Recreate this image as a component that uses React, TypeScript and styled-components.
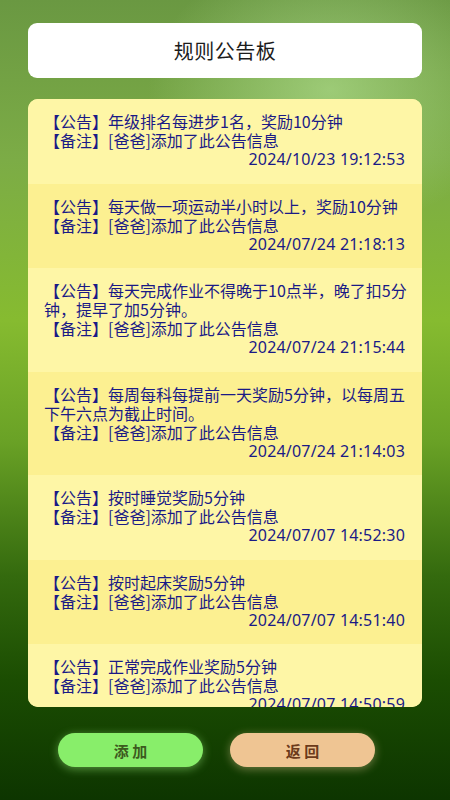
import React from 'react';
import styled, { createGlobalStyle } from 'styled-components';

interface Notice {
  content: string;
  author: string;
  time: string;
}

const notices: Notice[] = [
  { content: '年级排名每进步1名，奖励10分钟', author: '爸爸', time: '2024/10/23 19:12:53' },
  { content: '每天做一项运动半小时以上，奖励10分钟', author: '爸爸', time: '2024/07/24 21:18:13' },
  { content: '每天完成作业不得晚于10点半，晚了扣5分钟，提早了加5分钟。', author: '爸爸', time: '2024/07/24 21:15:44' },
  { content: '每周每科每提前一天奖励5分钟，以每周五下午六点为截止时间。', author: '爸爸', time: '2024/07/24 21:14:03' },
  { content: '按时睡觉奖励5分钟', author: '爸爸', time: '2024/07/07 14:52:30' },
  { content: '按时起床奖励5分钟', author: '爸爸', time: '2024/07/07 14:51:40' },
  { content: '正常完成作业奖励5分钟', author: '爸爸', time: '2024/07/07 14:50:59' },
];

const GlobalStyle = createGlobalStyle`
  html, body {
    margin: 0;
    padding: 0;
  }
  body {
    font-family: "Noto Sans CJK SC", "Noto Sans", sans-serif;
  }
`;

export default function App() {
  return (
    <>
      <GlobalStyle />
      <Root>
        <TitleCard>规则公告板</TitleCard>
        <Board>
          {notices.map((item, index) => (
            <NoticeItem key={item.time} odd={index % 2 === 1}>
              <Line>【公告】{item.content}</Line>
              <Line>【备注】[{item.author}]添加了此公告信息</Line>
              <Time>{item.time}</Time>
            </NoticeItem>
          ))}
        </Board>
        <ButtonRow>
          <ActionButton bg="#88ee6a" fg="#3d5a1e" glow="rgba(170, 255, 140, 0.45)">
            添 加
          </ActionButton>
          <ActionButton bg="#efc593" fg="#6b3a1a" glow="rgba(255, 220, 170, 0.4)">
            返 回
          </ActionButton>
        </ButtonRow>
      </Root>
    </>
  );
}

const Root = styled.main`
  display: flex;
  flex-direction: column;
  width: 450px;
  height: 800px;
  box-sizing: border-box;
  padding: 23px 28px 0;
  overflow: hidden;

  background:
    radial-gradient(ellipse 260px 200px at 330px 90px, rgba(190, 235, 160, 0.55), rgba(190, 235, 160, 0) 70%),
    linear-gradient(
      180deg,
      #6a9842 0%,
      #7cac46 20%,
      #86bb30 40%,
      #6aa226 55%,
      #346a0e 72%,
      #1b4d02 85%,
      #0d3500 100%
    );
`;

const TitleCard = styled.header`
  height: 55px;
  border-radius: 9px;
  background-color: #ffffff;

  display: flex;
  align-items: center;
  justify-content: center;

  color: #1c1c1c;
  font-size: 20px;
  letter-spacing: 0.5px;
`;

const Board = styled.section`
  margin-top: 21px;
  height: 608px;
  border-radius: 10px;
  overflow: hidden;
  background-color: #fef7a8;
`;

const NoticeItem = styled.article<{ odd: boolean }>`
  padding: 13px 15px 14.5px 16px;
  background-color: ${({ odd }) => (odd ? '#fcf091' : '#fef6a6')};
  color: #1a1a86;
  font-size: 16px;
  line-height: 19px;
`;

const Line = styled.p`
  margin: 0;
`;

const Time = styled.p`
  margin: 0;
  padding-right: 2px;
  text-align: right;
  font-family: "Noto Sans", "Open Sans", sans-serif;
  letter-spacing: 0.2px;
`;

const ButtonRow = styled.footer`
  display: flex;
  gap: 27px;
  padding: 26px 0 0 30px;
`;

const ActionButton = styled.button<{ bg: string; fg: string; glow: string }>`
  width: 145px;
  height: 34px;
  border: none;
  border-radius: 17px;
  background-color: ${({ bg }) => bg};
  color: ${({ fg }) => fg};
  box-shadow: 0 2px 10px ${({ glow }) => glow};

  font-family: "Noto Sans CJK SC", sans-serif;
  font-size: 15px;
  font-weight: 700;
`;
